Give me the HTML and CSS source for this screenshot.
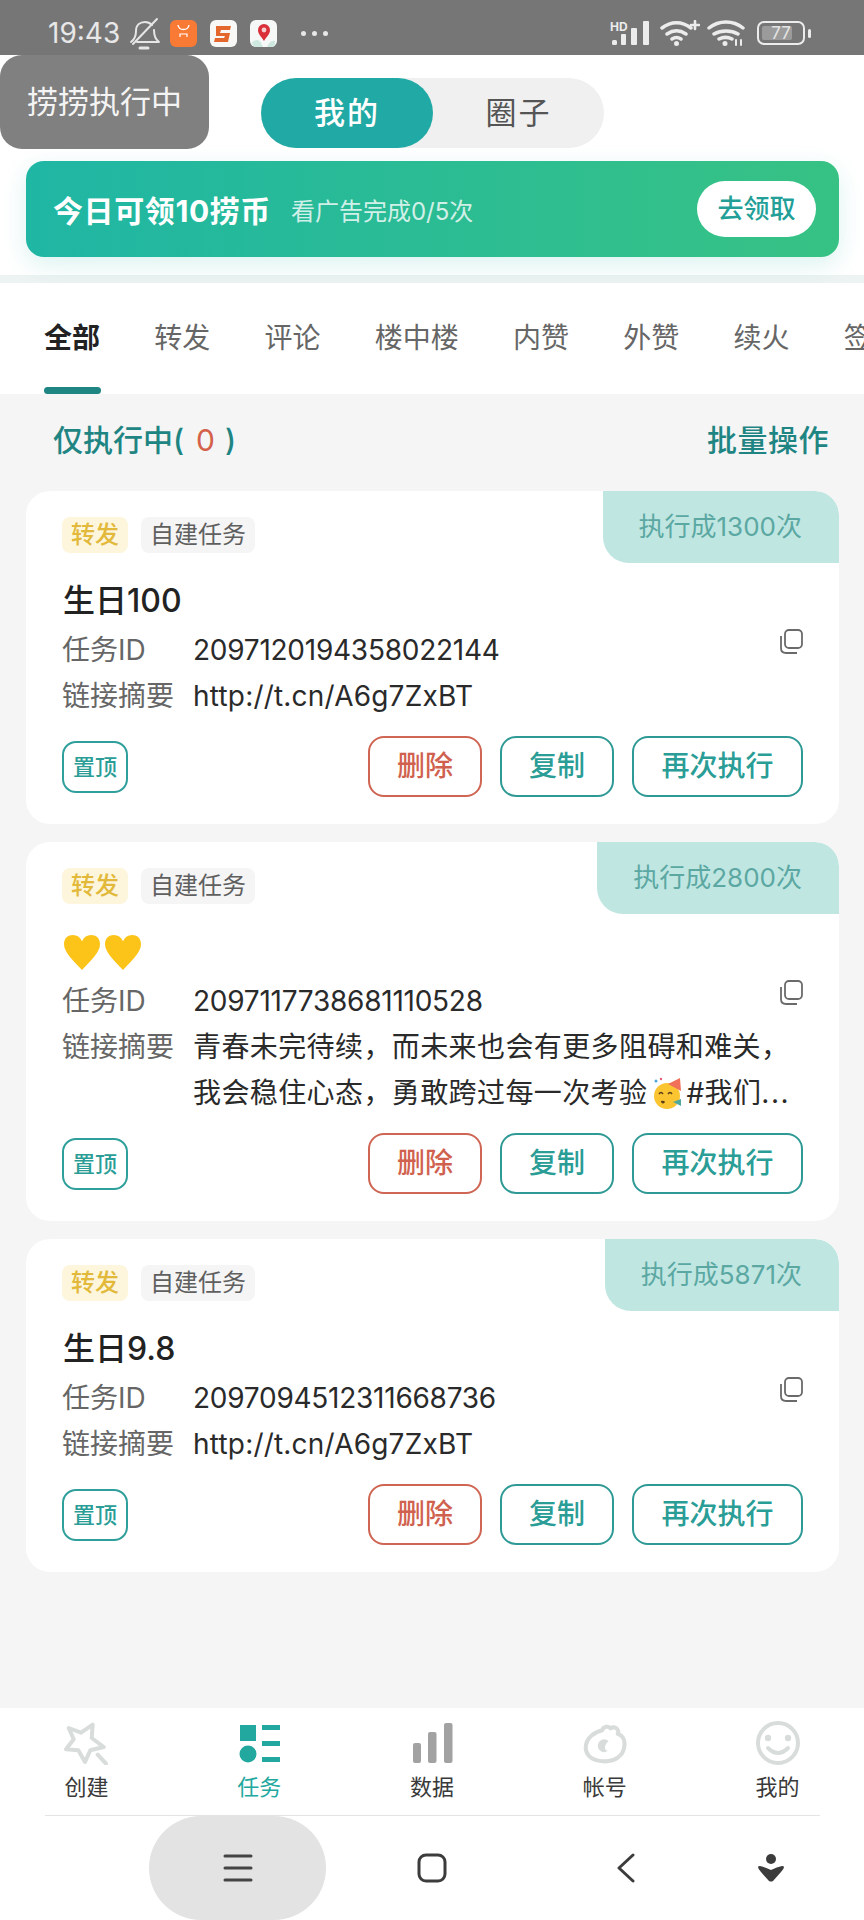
FILE: index.html
```html
<!DOCTYPE html>
<html lang="zh">
<head>
<meta charset="utf-8">
<title>任务</title>
<link rel="stylesheet" href="styles.css">
</head>
<body>
<div class="phone">
  <div class="status">
    <span class="time">19:43</span>
    <svg class="ic-bell" viewBox="0 0 33 33" fill="none" stroke="#e6e6e6" stroke-width="2" stroke-linecap="round" stroke-linejoin="round"><path d="M3 25c4-3 5-6 5-11 0-6 4-9 9-9 3 0 5 1 7 3M26 13c0 5 1 9 5 12H9"/><path d="M5 27 29 2"/><path d="M12 31h8" stroke-width="3"/></svg>
    <svg class="ic-app ic-mi" viewBox="0 0 27 27"><rect width="27" height="27" rx="6" fill="#f97a35"/><path d="M8 5c1 6 10 6 11 0" fill="none" stroke="#fff" stroke-width="1.4"/><path d="M10 17v-3h7v3" fill="none" stroke="#fff" stroke-width="1.2"/></svg>
    <svg class="ic-app" viewBox="0 0 27 27"><rect width="27" height="27" rx="6" fill="#f8f8f6"/><path d="M6 6h15l-1 4H11l-1 3h10l-2 9H4l1-4h9l1-2H6z" fill="#e4682e"/></svg>
    <svg class="ic-app" viewBox="0 0 27 27"><rect width="27" height="27" rx="6" fill="#f6f8f8"/><path d="M2 22c6-4 8-2 11 5H5q-3-1-3-5zM17 27c2-5 5-7 8-6v3q0 3-3 3z" fill="#cfe8df"/><path d="M14 21c-3-5-6-7-6-11a6 6 0 0 1 12 0c0 4-3 6-6 11z" fill="#d9303a"/><circle cx="14" cy="10" r="2.4" fill="#f6d0d0"/></svg>
    <span class="dots"><i></i><i></i><i></i></span>
    <span class="status-right">
      <svg class="ic-sig" viewBox="0 0 41 26"><text x="0" y="11" class="hd">HD</text><g fill="#ececec"><rect x="2" y="20" width="5" height="5" rx="1.500"/><rect x="11" y="14" width="5" height="11" rx="1"/><rect x="21" y="8" width="6" height="17" rx="1"/><rect x="33" y="1" width="6" height="24" rx="1"/></g></svg>
      <svg class="ic-wifi" viewBox="0 0 40 26" fill="none" stroke="#ececec" stroke-width="3.500" stroke-linecap="round"><path d="M2 8c9-7 20-7 29 0M7 14c6-4 13-4 19 0M12 19c3-2 6-2 9 0"/><circle cx="16.500" cy="23.500" r="2.500" fill="#ececec" stroke="none"/><path d="M35 1v8M31 5h8" stroke-width="2.600"/></svg>
      <svg class="ic-wifi2" viewBox="0 0 38 26" fill="none" stroke="#ececec" stroke-width="3.500" stroke-linecap="round"><path d="M2 8c10-8 24-8 34 0M7 14c7-4 17-4 24 0M12 19c4-2 9-2 13 0"/><circle cx="18" cy="23.500" r="2.500" fill="#ececec" stroke="none"/><path d="M29 25v-5M34 25v-5" stroke-width="2"/></svg>
      <span class="battery"><span class="batt-fill"></span><span class="batt-num">77</span></span>
      <span class="batt-nub"></span>
    </span>
  </div>

  <div class="floater">捞捞执行中</div>

  <header class="head">
    <div class="toggle">
      <div class="toggle-on">我的</div>
      <div class="toggle-off">圈子</div>
    </div>
    <div class="banner">
      <span class="banner-title">今日可领10捞币</span>
      <span class="banner-sub">看广告完成0/5次</span>
      <span class="banner-btn">去领取</span>
    </div>
  </header>

  <nav class="tabs">
    <div class="tab tab-on">全部</div>
    <div class="tab">转发</div>
    <div class="tab">评论</div>
    <div class="tab">楼中楼</div>
    <div class="tab">内赞</div>
    <div class="tab">外赞</div>
    <div class="tab">续火</div>
    <div class="tab">签到</div>
  </nav>

  <main class="main">
    <div class="filter">
      <span class="filter-l">仅执行中(<span class="zero">0</span>)</span>
      <span class="filter-r">批量操作</span>
    </div>

    <section class="card">
      <div class="badge">执行成1300次</div>
      <div class="tags"><span class="tag tag-y">转发</span><span class="tag tag-g">自建任务</span></div>
      <div class="title">生日100</div>
      <div class="row"><span class="label">任务ID</span><span class="value value-id">2097120194358022144</span></div>
      <svg class="copy" viewBox="0 0 24 26" fill="none" stroke="#6a6a6a" stroke-width="1.800"><rect x="6" y="1" width="17" height="18" rx="4"/><path d="M2 7v12q0 5 5 5h11"/></svg>
      <div class="row"><span class="label">链接摘要</span><span class="value">http://t.cn/A6g7ZxBT</span></div>
      <div class="actions">
        <span class="pin">置顶</span>
        <span class="btn btn-red">删除</span>
        <span class="btn">复制</span>
        <span class="btn btn-wide">再次执行</span>
      </div>
    </section>

    <section class="card">
      <div class="badge">执行成2800次</div>
      <div class="tags"><span class="tag tag-y">转发</span><span class="tag tag-g">自建任务</span></div>
      <div class="title title-emoji">
        <svg class="heart" viewBox="0 0 38 36" preserveAspectRatio="none"><path d="M19 35C11 27 1 18 1 10 1 4 5 1 10 1c4 0 7 2 9 6 2-4 5-6 9-6 5 0 9 3 9 9 0 8-10 17-18 25z" fill="#fcc419"/></svg>
        <svg class="heart" viewBox="0 0 38 36" preserveAspectRatio="none"><path d="M19 35C11 27 1 18 1 10 1 4 5 1 10 1c4 0 7 2 9 6 2-4 5-6 9-6 5 0 9 3 9 9 0 8-10 17-18 25z" fill="#fcc419"/></svg>
      </div>
      <div class="row"><span class="label">任务ID</span><span class="value value-id">2097117738681110528</span></div>
      <svg class="copy" viewBox="0 0 24 26" fill="none" stroke="#6a6a6a" stroke-width="1.800"><rect x="6" y="1" width="17" height="18" rx="4"/><path d="M2 7v12q0 5 5 5h11"/></svg>
      <div class="row"><span class="label">链接摘要</span><span class="value value-wrap">青春未完待续，而未来也会有更多阻碍和难关，我会稳住心态，勇敢跨过每一次考验<svg class="party" viewBox="0 0 30 32"><circle cx="14" cy="19" r="13" fill="#fbc531"/><path d="M15 7 27 1l1 13z" fill="#f0705a"/><path d="M6 17q2-3 4 0M15 17q2-3 4 0" fill="none" stroke="#5a3d1a" stroke-width="1.500"/><path d="M8 24q3-1 4 1-2 3-4 0" fill="#5a3d1a"/><path d="M20 25l8-3v7z" fill="#4ea8a0"/><circle cx="3" cy="4" r="1.500" fill="#4ea8de"/><circle cx="8" cy="2" r="1.200" fill="#e85d75"/></svg>#我们<span class="ell">...</span></span></div>
      <div class="actions">
        <span class="pin">置顶</span>
        <span class="btn btn-red">删除</span>
        <span class="btn">复制</span>
        <span class="btn btn-wide">再次执行</span>
      </div>
    </section>

    <section class="card">
      <div class="badge">执行成5871次</div>
      <div class="tags"><span class="tag tag-y">转发</span><span class="tag tag-g">自建任务</span></div>
      <div class="title">生日9.8</div>
      <div class="row"><span class="label">任务ID</span><span class="value value-id">2097094512311668736</span></div>
      <svg class="copy" viewBox="0 0 24 26" fill="none" stroke="#6a6a6a" stroke-width="1.800"><rect x="6" y="1" width="17" height="18" rx="4"/><path d="M2 7v12q0 5 5 5h11"/></svg>
      <div class="row"><span class="label">链接摘要</span><span class="value">http://t.cn/A6g7ZxBT</span></div>
      <div class="actions">
        <span class="pin">置顶</span>
        <span class="btn btn-red">删除</span>
        <span class="btn">复制</span>
        <span class="btn btn-wide">再次执行</span>
      </div>
    </section>
  </main>

  <footer class="nav">
    <div class="nav-item">
      <svg class="nav-ic" viewBox="0 0 44 44" fill="none" stroke="#d8dcdb" stroke-width="4" stroke-linejoin="round" stroke-linecap="round"><path d="M4.700 7 17 11.700 28.700 3.700 27.700 17 39.700 26 26.300 29.300 21 41 14.300 29.300 2 28.300 9.700 18.300z"/><path d="M33.700 33.700 42 42.700"/></svg>
      <span>创建</span>
    </div>
    <div class="nav-item nav-on">
      <svg class="nav-ic" viewBox="0 0 44 44" fill="#22a89e"><rect x="3" y="4" width="16" height="16"/><circle cx="11" cy="33" r="8.500"/><rect x="25" y="4" width="18" height="5"/><rect x="25" y="20" width="18" height="5"/><rect x="25" y="36" width="18" height="5"/></svg>
      <span>任务</span>
    </div>
    <div class="nav-item">
      <svg class="nav-ic" viewBox="0 0 44 44" fill="#a2a2a2"><rect x="3" y="22" width="8" height="20" rx="2"/><rect x="18" y="11" width="8.500" height="31" rx="2"/><rect x="34" y="2" width="8.500" height="40" rx="2"/></svg>
      <span>数据</span>
    </div>
    <div class="nav-item">
      <svg class="nav-ic" viewBox="0 0 48 44" fill="none" stroke="#d8dcdb" stroke-width="4.500" stroke-linejoin="round"><path d="M3 27C3 17 12 10 21 8c1-4 7-5 9-2 3-2 7-1 8 2 1 2 0 4 0 4 6 2 8 8 7 14-1 10-10 16-21 16C12 42 3 37 3 27z"/><path d="M28 20a7 7 0 1 0 0 10c-2 1-4 0-4-3 0-3 2-6 4-7z" fill="#d8dcdb" stroke="none"/></svg>
      <span>帐号</span>
    </div>
    <div class="nav-item">
      <svg class="nav-ic" viewBox="0 0 44 44" fill="none" stroke="#d8dcdb" stroke-width="4" stroke-linecap="round"><circle cx="22" cy="22" r="20"/><circle cx="12" cy="17" r="3.200" fill="#d8dcdb" stroke="none"/><circle cx="32" cy="17" r="3.200" fill="#d8dcdb" stroke="none"/><path d="M12 27q10 10 20 0"/></svg>
      <span>我的</span>
    </div>
  </footer>

  <div class="sys">
    <div class="sys-pill">
      <svg class="sys-menu" viewBox="0 0 30 28" stroke="#444" stroke-width="3" stroke-linecap="round"><path d="M2 2h26M2 14h26M2 26h26"/></svg>
    </div>
    <svg class="sys-home" viewBox="0 0 30 30" fill="none" stroke="#3c3c3c" stroke-width="3"><rect x="2" y="2" width="26" height="26" rx="7"/></svg>
    <svg class="sys-back" viewBox="0 0 18 30" fill="none" stroke="#3c3c3c" stroke-width="3" stroke-linecap="round" stroke-linejoin="round"><path d="M16 2 2 15l14 13"/></svg>
    <svg class="sys-fold" viewBox="0 0 28 30" fill="#3c3c3c"><circle cx="14" cy="6" r="5"/><path d="M1 14q0-1 2-1 5 1 11 4 6-3 11-4 2 0 2 1 0 2-3 5l-8 9q-2 1-4 0l-8-9q-3-3-3-5z"/></svg>
  </div>
</div>
</body>
</html>
```
FILE: styles.css
```css
* { box-sizing: border-box; }
html, body { margin: 0; padding: 0; }
body {
  font-family: Inter, "Noto Sans CJK SC", sans-serif;
  color: #222;
  background: #fff;
}
.phone {
  position: relative;
  width: 864px;
  height: 1920px;
  display: flex;
  flex-direction: column;
  overflow: hidden;
  background: #f5f5f5;
}

/* status bar */
.status {
  height: 55px;
  flex: none;
  background: #767676;
  display: flex;
  align-items: center;
  padding-left: 48px;
  color: #e8e8e8;
}
.time { font-size: 28px; width: 82px; margin-top: 10px; line-height: 44px; }
.ic-bell { width: 33px; height: 33px; margin-top: 11px; margin-left: -2px; }
.ic-app { width: 27px; height: 27px; margin-left: 13px; margin-top: 12px; }
.ic-mi { margin-left: 9px; }
.dots { display: flex; gap: 6px; margin-left: 24px; margin-top: 11px; }
.dots i { width: 5px; height: 5px; border-radius: 50%; background: #e8e8e8; display: block; }
.status-right { margin-left: auto; display: flex; align-items: center; margin-top: 11px; padding-right: 52px; }
.ic-sig { width: 41px; height: 26px; overflow: visible; }
.hd { font-size: 12px; font-weight: 700; fill: #ececec; font-family: Inter, sans-serif; }
.ic-wifi { width: 40px; height: 26px; margin-left: 9px; }
.ic-wifi2 { width: 38px; height: 26px; margin-left: 7px; }
.battery {
  position: relative;
  width: 48px;
  height: 24px;
  margin-left: 12px;
  border: 2px solid #ececec;
  border-radius: 7px;
  overflow: hidden;
  display: flex;
  align-items: center;
  justify-content: center;
}
.batt-fill { position: absolute; left: 3px; top: 3px; bottom: 3px; width: 30px; background: #9b9b9b; border-radius: 2px; }
.batt-num { position: relative; font-size: 17px; line-height: 20px; color: #e4e4e4; }
.batt-nub { width: 3px; height: 9px; margin-left: 3px; margin-right: 1px; background: #ececec; border-radius: 2px; }

/* floating pill */
.floater {
  position: absolute;
  left: 0;
  top: 55px;
  width: 209px;
  height: 94px;
  background: #808080;
  color: #f4f4f4;
  border-radius: 22px;
  font-size: 31px;
  line-height: 94px;
  text-align: center;
  z-index: 3;
}

/* header */
.head {
  flex: none;
  background: #fff;
  padding: 23px 25px 18px 26px;
  border-bottom: 8px solid #edf3f2;
  height: 228px;
}
.toggle {
  width: 343px;
  height: 70px;
  margin-left: 235px;
  border-radius: 35px;
  background: #f0f0f0;
  display: flex;
  font-size: 31px;
  line-height: 70px;
  text-align: center;
}
.toggle-on { width: 172px; border-radius: 35px; background: #21aaa5; color: #fff; font-weight: 500; letter-spacing: 2px; }
.toggle-off { flex: 1; color: #555; letter-spacing: 2px; }
.banner {
  margin-top: 13px;
  height: 96px;
  border-radius: 18px;
  background: linear-gradient(90deg, #1fb6a4, #37c284);
  box-shadow: 0 8px 24px rgba(34, 180, 160, .16);
  display: flex;
  align-items: center;
  padding: 0 23px 0 27px;
  color: #fff;
}
.banner-title { font-size: 30px; font-weight: 700; letter-spacing: .6px; }
.banner-sub { font-size: 24px; margin-left: 20px; color: rgba(255, 255, 255, .8); }
.banner-btn {
  margin-left: auto;
  width: 119px;
  height: 56px;
  border-radius: 28px;
  background: #fff;
  color: #239f98;
  font-size: 26px;
  font-weight: 500;
  line-height: 56px;
  text-align: center;
}

/* tabs */
.tabs {
  flex: none;
  height: 111px;
  background: #fff;
  display: flex;
  gap: 54.250px;
  padding-left: 44px;
  overflow: hidden;
}
.tab {
  position: relative;
  flex: none;
  font-size: 28px;
  line-height: 110px;
  color: #666;
}
.tab-on { color: #222; font-weight: 700; }
.tab-on::after {
  content: "";
  position: absolute;
  left: 0;
  right: -1px;
  bottom: 0;
  height: 7px;
  border-radius: 4px;
  background: #1f8583;
}

/* main list */
.main {
  flex: 1;
  padding: 0 25px 0 26px;
  background: #f5f5f5;
}
.filter {
  height: 97px;
  display: flex;
  align-items: center;
  justify-content: space-between;
  font-size: 30px;
  line-height: 40px;
  color: #1f8583;
  font-weight: 500;
  padding: 0 10px 6px 27px;
}
.zero { color: #d4614a; margin: 0 10px 0 12px; font-weight: 400; }
.filter-r { letter-spacing: .5px; }

.card {
  position: relative;
  background: #fff;
  border-radius: 24px;
  padding: 26px 36px 27px;
  margin-bottom: 18px;
  overflow: hidden;
}
.badge {
  position: absolute;
  right: 0;
  top: 0;
  height: 72px;
  padding: 0 37px 0 36px;
  background: #c0e6e2;
  color: #5ba8a2;
  font-size: 26px;
  line-height: 72px;
  border-radius: 0 24px 0 26px;
}
.tags { display: flex; gap: 13px; height: 36px; }
.tag { font-size: 24px; line-height: 36px; padding: 0 9px; border-radius: 8px; }
.tag-y { background: #fdf6dc; color: #e2b93b; font-weight: 500; }
.tag-g { background: #f5f5f5; color: #5f5f5f; }
.title {
  margin: 25px 0 3px 1px;
  font-size: 32px;
  line-height: 46px;
  height: 46px;
  font-weight: 500;
  color: #222;
}
.title-emoji { display: flex; gap: 3px; align-items: center; }
.heart { width: 38px; height: 37px; }
.row { display: flex; font-size: 28px; line-height: 46px; }
.label { flex: none; width: 131px; color: #666; }
.value { letter-spacing: .2px; color: #2a2a2a; }
.value-id { letter-spacing: -.25px; }
.value-wrap { width: 612px; letter-spacing: .4px; }
.party { width: 30px; height: 32px; vertical-align: -6px; margin: 0 3px 0 6px; }
.ell { letter-spacing: 1.500px; }
.copy { position: absolute; right: 36px; top: 138px; width: 24px; height: 26px; }

.actions { display: flex; gap: 18px; align-items: center; margin-top: 17px; height: 61px; }
.pin {
  width: 66px;
  height: 52px;
  margin-right: auto;
  border: 2px solid #2f9f9b;
  border-radius: 14px;
  color: #2a9d96;
  font-size: 22px;
  font-weight: 500;
  line-height: 48px;
  text-align: center;
}
.btn {
  width: 114px;
  height: 61px;
  border: 2px solid #2f9a95;
  border-radius: 16px;
  color: #2a9d96;
  font-size: 28px;
  font-weight: 500;
  line-height: 56px;
  text-align: center;
}
.btn-red { border-color: #cf6553; color: #d0614e; }
.btn-wide { width: 171px; }

/* tab bar */
.nav {
  flex: none;
  height: 108px;
  background: #fff;
  display: grid;
  grid-template-columns: repeat(5, 1fr);
  position: relative;
}
.nav::after {
  content: "";
  position: absolute;
  left: 45px;
  right: 44px;
  bottom: 0;
  height: 1px;
  background: #e4e4e4;
}
.nav-item {
  display: flex;
  flex-direction: column;
  align-items: center;
  padding-top: 13px;
  font-size: 22px;
  color: #3a3a3a;
}
.nav-item span { line-height: 32px; margin-top: 6px; }
.nav-on { color: #22a89e; }
.nav-ic { width: 44px; height: 44px; display: block; }

/* system bar */
.sys {
  flex: none;
  height: 104px;
  background: #fff;
  display: flex;
  align-items: center;
  padding-left: 149px;
}
.sys-pill {
  width: 177px;
  height: 104px;
  border-radius: 52px;
  background: #e3e3e3;
  display: flex;
  align-items: center;
  justify-content: center;
}
.sys-menu { width: 30px; height: 28px; }
.sys-home { width: 30px; height: 30px; margin-left: 91px; }
.sys-back { width: 18px; height: 30px; margin-left: 170px; }
.sys-fold { width: 28px; height: 30px; margin-left: 122px; }
```
